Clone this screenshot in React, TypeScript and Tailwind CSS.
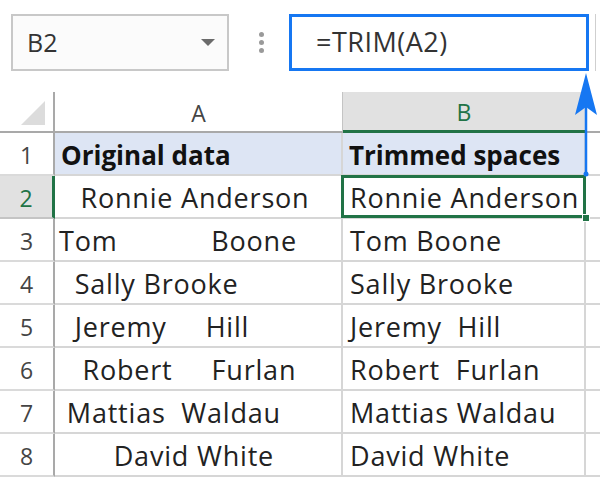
const rows: { n: number; a: string; b: string }[] = [
  { n: 3, a: "Tom            Boone", b: "Tom Boone" },
  { n: 4, a: "  Sally Brooke", b: "Sally Brooke" },
  { n: 5, a: "  Jeremy     Hill", b: "Jeremy  Hill" },
  { n: 6, a: "   Robert     Furlan", b: "Robert  Furlan" },
  { n: 7, a: " Mattias  Waldau", b: "Mattias Waldau" },
  { n: 8, a: "       David White", b: "David White" },
];

const font = { fontFamily: '"Open Sans", "Liberation Sans", sans-serif' };

export default function App() {
  return (
    <div className="w-[600px] h-[477px] bg-white overflow-hidden relative text-[#222]" style={font}>
      {/* formula bar */}
      <div className="h-[92px] flex items-start pt-[14px]">
        <div className="ml-[11px] w-[218px] h-[57px] border-2 border-[#c8c8c8] bg-[#fbfbfb] flex items-center justify-between pl-[14px] pr-[12px]">
          <span className="text-[25px] text-[#333]">B2</span>
          <span className="w-0 h-0 border-l-[7px] border-r-[7px] border-t-[7px] border-l-transparent border-r-transparent border-t-[#6b6b6b]" />
        </div>
        <div className="ml-[30px] mt-[18px] flex flex-col gap-[3px]">
          <span className="w-[5px] h-[5px] rounded-full bg-[#9a9a9a]" />
          <span className="w-[5px] h-[5px] rounded-full bg-[#9a9a9a]" />
          <span className="w-[5px] h-[5px] rounded-full bg-[#9a9a9a]" />
        </div>
        <div className="ml-[25px] w-[300px] h-[57px] border-[3px] border-[#1677f2] flex items-center pl-[24px]">
          <span className="text-[27px] tracking-[0.5px] text-[#333]">=TRIM(A2)</span>
        </div>
        <div className="ml-[6px] w-[1px] h-[57px] bg-[#cfcfcf]" />
      </div>

      {/* grid */}
      <div className="grid grid-cols-[55px_288px_243px_14px] grid-rows-[41px_repeat(8,43px)]">
        {/* header row */}
        <div className="border-r-2 border-b-2 border-[#a9a9a9] relative bg-white">
          <svg className="absolute left-[21px] top-[9px]" width="24" height="24" viewBox="0 0 24 24">
            <polygon points="24,0 24,24 0,24" fill="#dcdcdc" />
          </svg>
        </div>
        <div className="border-r border-b-2 border-[#c4c4c4] border-b-[#a9a9a9] bg-white flex items-center justify-center pt-[3px] text-[23px] text-[#444]">
          A
        </div>
        <div className="border-r border-[#c4c4c4] border-b-[3px] border-b-[#217346] bg-[#e1e1e1] flex items-center justify-center pt-[3px] text-[23px] text-[#217346]">
          B
        </div>
        <div className="border-b-2 border-[#a9a9a9] bg-white" />

        {/* row 1 */}
        <div className="border-r-2 border-[#a9a9a9] border-b-2 border-b-[#dadada] flex items-center justify-center pt-[4px] text-[23px] text-[#444]">1</div>
        <div className="bg-[#dde5f4] border-r-2 border-b-2 border-[#d6d6d6] flex items-center pl-[6px] pt-[4px] text-[26px] font-bold text-[#111] whitespace-pre">
          Original data
        </div>
        <div className="bg-[#dde5f4] border-r-2 border-b-2 border-[#d6d6d6] flex items-center pl-[6px] pt-[4px] text-[26px] font-bold text-[#111] whitespace-pre">
          Trimmed spaces
        </div>
        <div className="border-b-2 border-[#d6d6d6]" />

        {/* row 2 */}
        <div className="bg-[#e1e1e1] border-r-[3px] border-[#217346] border-b-2 border-b-[#c4c4c4] flex items-center justify-center pt-[4px] text-[23px] text-[#217346]">2</div>
        <div className="border-r-2 border-b-2 border-[#d6d6d6] flex items-center pl-[2px] pt-[4px] text-[27px] tracking-[0.8px] whitespace-pre">
          {"   Ronnie Anderson"}
        </div>
        <div className="border-r-2 border-b-2 border-[#d6d6d6] flex items-center pl-[7px] pt-[4px] text-[27px] tracking-[0.8px] whitespace-pre relative">
          Ronnie Anderson
          <span className="absolute -left-[2px] -top-px -right-[2px] -bottom-px border-[3px] border-[#217346]" />
          <span className="absolute -right-[6px] -bottom-[5px] w-[8px] h-[8px] bg-[#217346] border border-white" />
        </div>
        <div className="border-b-2 border-[#d6d6d6]" />

        {rows.map((r) => (
          <Row key={r.n} {...r} />
        ))}
      </div>

      {/* arrow from B2 up to the formula box */}
      <svg className="absolute left-[574px] top-[71px]" width="24" height="106" viewBox="0 0 24 106">
        <line x1="12" y1="30" x2="12" y2="104" stroke="#1677f2" strokeWidth="2.5" />
        <polygon points="12,2 23,44 12,36 1,44" fill="#1677f2" />
        <circle cx="12" cy="103" r="2.5" fill="#1677f2" />
      </svg>
    </div>
  );
}

function Row({ n, a, b }: { n: number; a: string; b: string }) {
  return (
    <>
      <div className="border-r-2 border-[#a9a9a9] border-b-2 border-b-[#dadada] flex items-center justify-center pt-[4px] text-[23px] text-[#444]">{n}</div>
      <div className="border-r-2 border-b-2 border-[#d6d6d6] flex items-center pl-[4px] pt-[4px] text-[27px] tracking-[0.8px] whitespace-pre">{a}</div>
      <div className="border-r-2 border-b-2 border-[#d6d6d6] flex items-center pl-[7px] pt-[4px] text-[27px] tracking-[0.8px] whitespace-pre">{b}</div>
      <div className="border-b-2 border-[#d6d6d6]" />
    </>
  );
}
